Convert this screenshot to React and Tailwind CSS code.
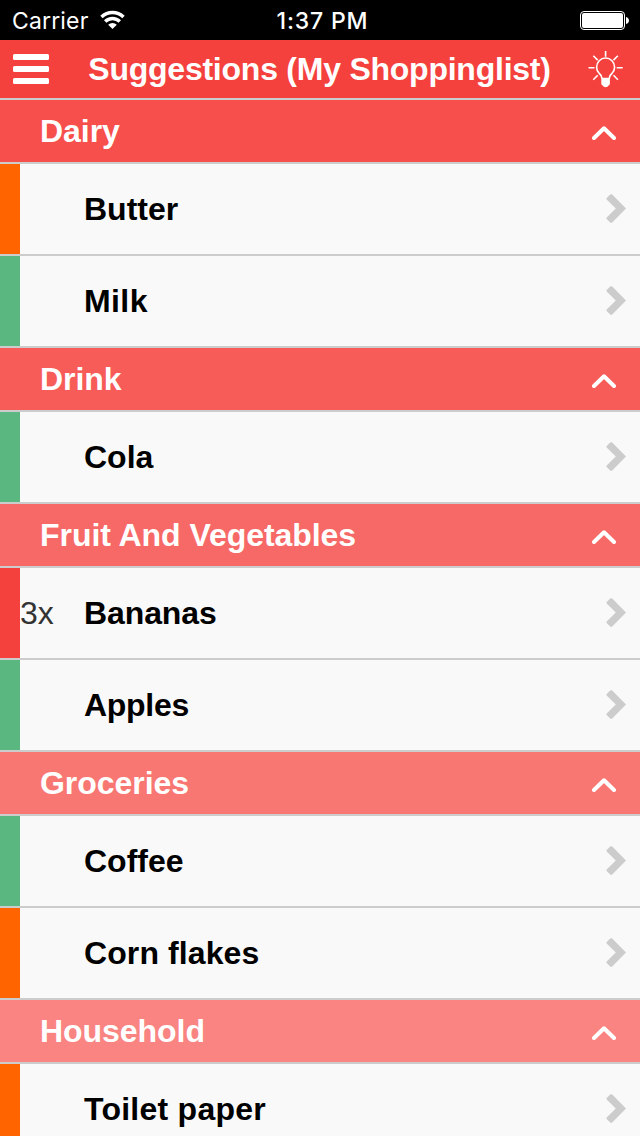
import React from 'react';

const groups = [
  {
    name: 'Dairy',
    color: 'bg-[#f74f4b]',
    items: [
      { name: 'Butter', bar: 'bg-[#ff6400]' },
      { name: 'Milk', bar: 'bg-[#5ab780]', tracking: 'tracking-[0.4px]' },
    ],
  },
  {
    name: 'Drink',
    color: 'bg-[#f75c58]',
    items: [{ name: 'Cola', bar: 'bg-[#5ab780]' }],
  },
  {
    name: 'Fruit And Vegetables',
    color: 'bg-[#f76966]',
    items: [
      { name: 'Bananas', amount: '3x', bar: 'bg-[#f5413d]', tracking: 'tracking-[-0.1px]' },
      { name: 'Apples', bar: 'bg-[#5ab780]', tracking: 'tracking-[-0.3px]' },
    ],
  },
  {
    name: 'Groceries',
    color: 'bg-[#f87773]',
    items: [
      { name: 'Coffee', bar: 'bg-[#5ab780]' },
      { name: 'Corn flakes', bar: 'bg-[#ff6400]', tracking: 'tracking-[0.1px]' },
    ],
  },
  {
    name: 'Household',
    color: 'bg-[#f98481]',
    items: [{ name: 'Toilet paper', bar: 'bg-[#ff6400]', tracking: 'tracking-[0.25px]' }],
  },
];

const StatusBar = () => (
  <div className="grid h-10 grid-cols-[1fr_auto_1fr] items-center bg-black pl-3 pr-[11px] font-['Inter','Roboto',sans-serif] text-[23px] text-white">
    <div className="flex items-center gap-3">
      <span className="pt-0.5 tracking-[0.15px]">Carrier</span>
      <svg width="25" height="20" viewBox="0 0 25 20" fill="none" stroke="white" strokeWidth="3.4">
        <path d="M1.500 7a15.600 15.600 0 0 1 22 0" />
        <path d="M5.200 11.500a10.300 10.300 0 0 1 14.600 0" />
        <path d="M12.500 19l-4.300-4.300a6.100 6.100 0 0 1 8.600 0z" fill="white" stroke="none" />
      </svg>
    </div>
    <span className="pt-0.5 pl-1 font-medium tracking-[0.85px]">1:37 PM</span>
    <svg className="justify-self-end" width="49" height="20" viewBox="0 0 49 20" fill="none">
      <rect x="0.5" y="1.5" width="44" height="18" rx="3.5" stroke="white" />
      <rect x="2" y="3" width="41" height="15" rx="2" fill="white" />
      <path d="M46 7c4 1 4 6 0 7z" fill="white" />
    </svg>
  </div>
);

const BulbIcon = () => (
  <svg width="36" height="38" viewBox="0 0 36 38" fill="none" stroke="white" strokeWidth="1.6">
    <path d="M17.600 1v5.800M.5 17.800h6M28.700 17.800h6M5.300 5.700l4.400 4.400M29.900 5.700l-4.400 4.400M5.300 29.700l4.400-4.400M29.900 29.700l-4.400-4.400" />
    <path d="M14 28.500c0-2.500-1-3.700-2.700-5a9 9 0 1 1 12.600 0c-1.700 1.300-2.700 2.500-2.700 5" />
    <path d="M13.300 27.800h8.600v5.700q0 1.500-1.300 2-1 1.800-3 1.800t-3-1.800q-1.300-.5-1.300-2z" fill="white" stroke="none" />
  </svg>
);

const Header = () => (
  <div className="flex h-[60px] items-center justify-between border-b-2 border-[#ccc] bg-[#f5413d] pl-[13px] pr-4">
    <div className="flex w-9 flex-col gap-1.5">
      <div className="h-1.5 rounded-[1.5px] bg-white" />
      <div className="h-1.5 rounded-[1.5px] bg-white" />
      <div className="h-1.5 rounded-[1.5px] bg-white" />
    </div>
    <h1 className="pl-0.5 text-[32px] leading-[58px] font-bold tracking-[-0.24px] whitespace-nowrap text-white">
      Suggestions (My Shoppinglist)
    </h1>
    <BulbIcon />
  </div>
);

const GroupHeader = ({ name, color }) => (
  <div className={`flex h-16 items-center justify-between border-b-2 border-[#ccc] pl-10 pr-6 text-white ${color}`}>
    <h2 className="text-[32px] leading-[62px] font-bold tracking-[-0.05px]">{name}</h2>
    <svg className="mt-1" width="24" height="14" viewBox="0 0 24 14" fill="none" stroke="white" strokeWidth="4">
      <path d="M2 12L12 2.300l10 9.700" strokeLinecap="round" strokeLinejoin="round" />
    </svg>
  </div>
);

const ItemRow = ({ name, amount, bar, tracking = '' }) => (
  <div className="flex h-[92px] items-center border-b-2 border-[#ccc] bg-[#f9f9f9] pr-[14px]">
    <div className={`w-5 self-stretch ${bar}`} />
    <span className="w-16 text-[32px] text-[#333]">{amount}</span>
    <span className={`flex-1 text-[32px] font-bold text-black ${tracking}`}>{name}</span>
    <svg width="20" height="30" viewBox="0 0 20 30" fill="#ccc">
      <path d="M.9 5.800q-.9-1.100 0-2L4.200.6q1-.9 2 0L20 14.500 6.200 28.500q-1 .9-2 0L.9 25.300q-.9-.9 0-2l8.900-8.800z" />
    </svg>
  </div>
);

export default function App() {
  return (
    <div className="h-[1136px] w-[640px] overflow-hidden bg-[#f9f9f9] font-['Liberation_Sans',Arial,sans-serif]">
      <StatusBar />
      <Header />
      {groups.map(group => (
        <div key={group.name}>
          <GroupHeader name={group.name} color={group.color} />
          {group.items.map(item => (
            <ItemRow key={item.name} {...item} />
          ))}
        </div>
      ))}
    </div>
  );
}
